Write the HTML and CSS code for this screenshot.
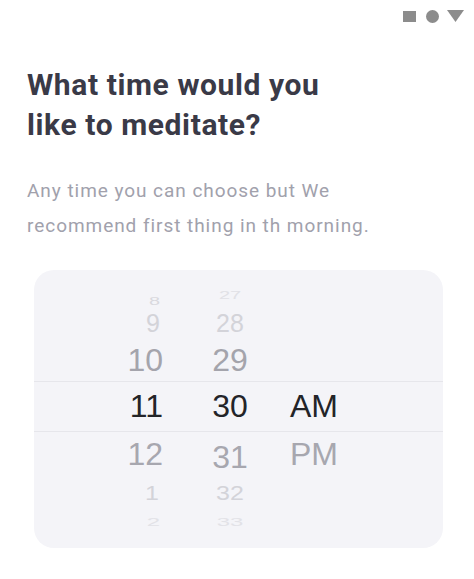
FILE: index.html
```html
<!DOCTYPE html>
<html lang="en">
<head>
<meta charset="utf-8">
<title>Meditation time</title>
<link rel="stylesheet" href="styles.css">
</head>
<body>
<div class="screen">
  <div class="status">
    <span class="st-square"></span>
    <span class="st-circle"></span>
    <svg class="st-tri" width="17" height="12" viewBox="0 0 17 12"><polygon points="0,0 17,0 8.5,12" fill="#8c8c8c"/></svg>
  </div>
  <div class="content">
    <h1 class="title">What time would you<br>like to meditate?</h1>
    <p class="subtitle">Any time you can choose but We<br>recommend first thing in th morning.</p>
  </div>
  <div class="picker">
    <div class="row r1">
      <span class="h"><span class="t">8</span></span>
      <span class="m"><span class="t">27</span></span>
      <span class="p"></span>
    </div>
    <div class="row r2">
      <span class="h"><span class="t">9</span></span>
      <span class="m"><span class="t">28</span></span>
      <span class="p"></span>
    </div>
    <div class="row r3">
      <span class="h"><span class="t">10</span></span>
      <span class="m"><span class="t">29</span></span>
      <span class="p"></span>
    </div>
    <div class="row sel">
      <span class="h"><span class="t">11</span></span>
      <span class="m"><span class="t">30</span></span>
      <span class="p"><span class="t">AM</span></span>
    </div>
    <div class="row r5">
      <span class="h"><span class="t">12</span></span>
      <span class="m"><span class="t">31</span></span>
      <span class="p"><span class="t">PM</span></span>
    </div>
    <div class="row r6">
      <span class="h"><span class="t">1</span></span>
      <span class="m"><span class="t">32</span></span>
      <span class="p"></span>
    </div>
    <div class="row r7">
      <span class="h"><span class="t">2</span></span>
      <span class="m"><span class="t">33</span></span>
      <span class="p"></span>
    </div>
  </div>
</div>
</body>
</html>
```
FILE: styles.css
```css
html, body {
  margin: 0;
  padding: 0;
  background: #ffffff;
}
.screen {
  width: 474px;
  height: 579px;
  overflow: hidden;
  font-family: Roboto, "Liberation Sans", sans-serif;
}
.status {
  display: flex;
  justify-content: flex-end;
  align-items: center;
  padding: 10px 10px 0 0;
  height: 12px;
}
.st-square {
  width: 13px;
  height: 11px;
  background: #8c8c8c;
}
.st-circle {
  width: 13px;
  height: 13px;
  border-radius: 50%;
  background: #8c8c8c;
  margin-left: 10px;
}
.st-tri {
  display: block;
  margin-left: 8px;
}
.content {
  padding: 0 10px 0 27px;
}
.title {
  margin: 43px 0 0;
  font-size: 30px;
  line-height: 40px;
  font-weight: 700;
  color: #3a3a47;
  letter-spacing: 0.6px;
}
.subtitle {
  margin: 28px 0 0;
  font-size: 19px;
  line-height: 35px;
  font-weight: 400;
  color: #a1a1ac;
  letter-spacing: 0.95px;
}
.picker {
  margin: 27px 0 0 34px;
  width: 409px;
  height: 278px;
  box-sizing: border-box;
  padding-top: 17px;
  background: #f4f4f8;
  border-radius: 20px;
  font-family: "Liberation Sans", Arial, sans-serif;
}
.row {
  display: grid;
  grid-template-columns: 162px 68px 1fr;
  align-items: center;
}
.h {
  text-align: right;
  padding-right: 33px;
}
.m {
  text-align: center;
}
.p {
  text-align: left;
  padding-left: 26px;
}
.t {
  display: inline-block;
}
.r1 { height: 20px; font-size: 20px; color: #dcdce1; }
.r1 .h .t { transform: translateY(3px) scaleY(0.55); margin-right: 3px; color: #d9d9de; }
.r1 .m .t { transform: translateY(-3px) scaleY(0.5); color: #e1e1e6; }
.r2 { height: 32px; font-size: 25px; color: #d3d3d9; }
.r2 .h .t { margin-right: 3px; }
.r3 { height: 42px; font-size: 32px; color: #a4a4ac; }
.sel {
  height: 49px;
  font-size: 32px;
  color: #232428;
  border-top: 1px solid #e6e6eb;
  border-bottom: 1px solid #e6e6eb;
}
.r5 { height: 44px; font-size: 32px; color: #a7a7af; }
.r5 .m .t { transform: translateY(3px); }
.r6 { height: 32px; font-size: 25px; color: #d3d3d9; }
.r6 .t { transform: scaleY(0.84); }
.r6 .h .t { margin-right: 4px; }
.r7 { height: 24px; font-size: 24px; color: #e2e2e7; }
.r7 .t { transform: scaleY(0.45); }
.r7 .h .t { margin-right: 3px; }
```
